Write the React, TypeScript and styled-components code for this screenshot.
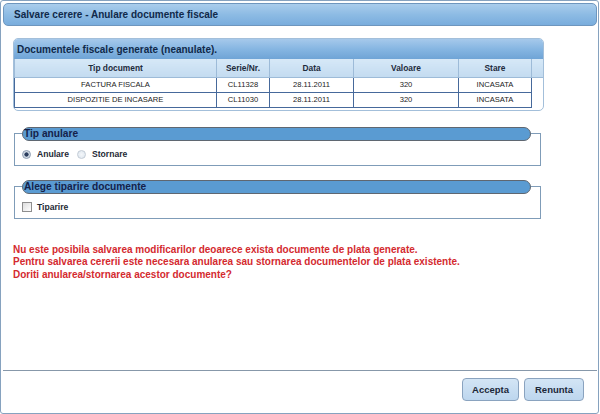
import React from "react";
import styled, { createGlobalStyle } from "styled-components";

const GlobalStyle = createGlobalStyle`
  html, body { margin: 0; padding: 0; background: #ffffff; }
  body { font-family: "Liberation Sans", Arial, sans-serif; }
  * { box-sizing: border-box; }
`;

const Window = styled.div`
  width: 599px;
  height: 414px;
  border: 1px solid #86a2bf;
  border-radius: 3px;
  padding: 2px 1px 0 2px;
  display: flex;
  flex-direction: column;
  background: #fff;
`;

const TitleBar = styled.div`
  height: 23px;
  border: 1px solid #6e96be;
  border-radius: 5px;
  background: linear-gradient(#aacdec 0%, #8dbbe4 50%, #79addd 100%);
  color: #10294a;
  font-weight: bold;
  font-size: 10px;
  display: flex;
  align-items: center;
  padding-left: 10px;
`;

const Body = styled.div`
  flex: 1;
  padding: 12px 0 0 10px;
  display: flex;
  flex-direction: column;
`;

const Panel = styled.div`
  width: 531px;
  border: 1px solid #a3bfda;
  border-radius: 5px;
  padding-bottom: 2px;
  overflow: hidden;
`;

const PanelHeader = styled.div`
  height: 20px;
  background: linear-gradient(#a6c9eb 0%, #86b6e2 50%, #6fa4d6 100%);
  color: #10294a;
  font-weight: bold;
  font-size: 10px;
  display: flex;
  align-items: center;
  padding-left: 3px;
`;

const Grid = styled.table`
  border-collapse: collapse;
  width: 529px;
  table-layout: fixed;
`;

const HeadCell = styled.th<{ $w: number }>`
  width: ${(p) => p.$w}px;
  height: 18px;
  padding: 0;
  background: linear-gradient(#d6e8f7, #c3dbf0);
  border: 1px solid #9dbbd8;
  border-top: none;
  font-size: 8.4px;
  font-weight: bold;
  color: #1d2b3c;
  text-align: center;
`;

const Cell = styled.td`
  height: 15px;
  padding: 0;
  border: 1px solid #46699b;
  font-size: 7.6px;
  color: #222;
  text-align: center;
`;

const FillerCell = styled.td`
  border: none;
  border-left: 1px solid #46699b;
  padding: 0;
`;

const Group = styled.fieldset<{ $top: number }>`
  width: 527px;
  margin: ${(p) => p.$top}px 0 0 1px;
  padding: 7px 0 4px 7px;
  border: 1px solid #7f9cb8;
  min-width: 0;
`;

const Legend = styled.legend`
  width: 509px;
  height: 14px;
  margin: 0;
  padding: 0 0 0 1px;
  background: #5a9bd2;
  border: 1px solid #5f6771;
  border-radius: 7px;
  color: #14224a;
  font-weight: bold;
  font-size: 10.2px;
  line-height: 12px;
`;

const OptionRow = styled.div`
  display: flex;
  align-items: center;
  height: 13px;
`;

const Radio = styled.span<{ $checked?: boolean }>`
  width: 9px;
  height: 9px;
  border-radius: 50%;
  border: 1px solid ${(p) => (p.$checked ? "#8b9bb0" : "#c3ccd6")};
  background: ${(p) =>
    p.$checked
      ? "radial-gradient(circle, #2b3d5e 0 1.8px, #c9d3de 2.4px, #eef2f6 100%)"
      : "radial-gradient(circle, #f4f7fa 0, #dde5ee 100%)"};
  margin-right: 6px;
`;

const CheckBox = styled.span`
  width: 10px;
  height: 10px;
  border: 1px solid #8e8e8e;
  background: linear-gradient(135deg, #dcdcdc, #ffffff);
  margin-right: 5px;
`;

const OptionLabel = styled.span<{ $gap?: number }>`
  font-size: 8.6px;
  font-weight: bold;
  color: #1f2a36;
  margin-right: ${(p) => p.$gap ?? 0}px;
`;

const Message = styled.div`
  margin-top: 25px;
  color: #d42a2f;
  font-weight: bold;
  font-size: 10px;
  line-height: 12.5px;
`;

const Footer = styled.div`
  height: 43px;
  border-top: 1px solid #8798aa;
  display: flex;
  justify-content: flex-end;
  align-items: flex-start;
  gap: 5px;
  padding: 7px 13px 0 0;
`;

const Button = styled.button<{ $w: number }>`
  width: ${(p) => p.$w}px;
  height: 23px;
  border: 1px solid #8aa3bf;
  border-radius: 4px;
  background: linear-gradient(#d3e5f5, #bdd6ee);
  font-family: "Liberation Sans", Arial, sans-serif;
  font-size: 9.5px;
  font-weight: bold;
  color: #1b2738;
  padding: 0;
`;

const columns: [string, number][] = [
  ["Tip document", 202],
  ["Serie/Nr.", 53],
  ["Data", 84],
  ["Valoare", 105],
  ["Stare", 73],
  ["", 12],
];

const rows = [
  ["FACTURA FISCALA", "CL11328", "28.11.2011", "320", "INCASATA"],
  ["DISPOZITIE DE INCASARE", "CL11030", "28.11.2011", "320", "INCASATA"],
];

export default function App() {
  return (
    <>
      <GlobalStyle />
      <Window>
        <TitleBar>Salvare cerere - Anulare documente fiscale</TitleBar>
        <Body>
          <Panel>
            <PanelHeader>Documentele fiscale generate (neanulate).</PanelHeader>
            <Grid>
              <thead>
                <tr>
                  {columns.map(([label, w], i) => (
                    <HeadCell key={i} $w={w}>
                      {label}
                    </HeadCell>
                  ))}
                </tr>
              </thead>
              <tbody>
                {rows.map((r, i) => (
                  <tr key={i}>
                    {r.map((c, j) => (
                      <Cell key={j}>{c}</Cell>
                    ))}
                    <FillerCell />
                  </tr>
                ))}
              </tbody>
            </Grid>
          </Panel>

          <Group $top={16}>
            <Legend>Tip anulare</Legend>
            <OptionRow>
              <Radio $checked />
              <OptionLabel $gap={8}>Anulare</OptionLabel>
              <Radio />
              <OptionLabel>Stornare</OptionLabel>
            </OptionRow>
          </Group>

          <Group $top={14}>
            <Legend>Alege tiparire documente</Legend>
            <OptionRow>
              <CheckBox />
              <OptionLabel>Tiparire</OptionLabel>
            </OptionRow>
          </Group>

          <Message>
            Nu este posibila salvarea modificarilor deoarece exista documente de plata generate.
            <br />
            Pentru salvarea cererii este necesara anularea sau stornarea documentelor de plata existente.
            <br />
            Doriti anularea/stornarea acestor documente?
          </Message>
        </Body>
        <Footer>
          <Button $w={57}>Accepta</Button>
          <Button $w={60}>Renunta</Button>
        </Footer>
      </Window>
    </>
  );
}
